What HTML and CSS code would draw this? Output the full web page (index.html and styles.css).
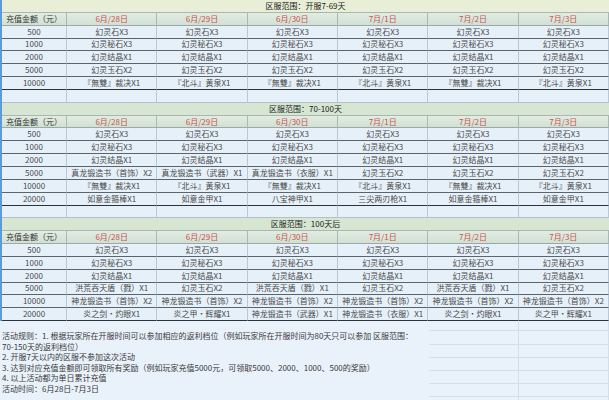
FILE: index.html
```html
<!DOCTYPE html>
<html lang="zh-CN">
<head>
<meta charset="utf-8">
<title>返利活动</title>
<link rel="stylesheet" href="styles.css">
</head>
<body>
<div class="sheet">
  <div class="grid">
    <div class="title t1">区服范围：开服7-69天</div>
    <div class="hd first">充值金额（元）</div><div class="hd">6月/28日</div><div class="hd">6月/29日</div><div class="hd">6月/30日</div><div class="hd">7月/1日</div><div class="hd">7月/2日</div><div class="hd">7月/3日</div>
    <div class="c">500</div><div class="c">幻灵石X3</div><div class="c">幻灵石X3</div><div class="c">幻灵石X3</div><div class="c">幻灵石X3</div><div class="c">幻灵石X3</div><div class="c">幻灵石X3</div>
    <div class="c">1000</div><div class="c">幻灵秘石X3</div><div class="c">幻灵秘石X3</div><div class="c">幻灵秘石X3</div><div class="c">幻灵秘石X3</div><div class="c">幻灵秘石X3</div><div class="c">幻灵秘石X3</div>
    <div class="c">2000</div><div class="c">幻灵结晶X1</div><div class="c">幻灵结晶X1</div><div class="c">幻灵结晶X1</div><div class="c">幻灵结晶X1</div><div class="c">幻灵结晶X1</div><div class="c">幻灵结晶X1</div>
    <div class="c">5000</div><div class="c">幻灵玉石X2</div><div class="c">幻灵玉石X2</div><div class="c">幻灵玉石X2</div><div class="c">幻灵玉石X2</div><div class="c">幻灵玉石X2</div><div class="c">幻灵玉石X2</div>
    <div class="c last">10000</div><div class="c last">『無雙』裁决X1</div><div class="c last">『北斗』黄泉X1</div><div class="c last">『無雙』裁决X1</div><div class="c last">『北斗』黄泉X1</div><div class="c last">『無雙』裁决X1</div><div class="c last">『北斗』黄泉X1</div>
    <div class="e"></div><div class="e"></div><div class="e"></div><div class="e"></div><div class="e"></div><div class="e"></div><div class="e"></div>

    <div class="title">区服范围：70-100天</div>
    <div class="hd first">充值金额（元）</div><div class="hd">6月/28日</div><div class="hd">6月/29日</div><div class="hd">6月/30日</div><div class="hd">7月/1日</div><div class="hd">7月/2日</div><div class="hd">7月/3日</div>
    <div class="c">500</div><div class="c">幻灵石X3</div><div class="c">幻灵石X3</div><div class="c">幻灵石X3</div><div class="c">幻灵石X3</div><div class="c">幻灵石X3</div><div class="c">幻灵石X3</div>
    <div class="c">1000</div><div class="c">幻灵秘石X3</div><div class="c">幻灵秘石X3</div><div class="c">幻灵秘石X3</div><div class="c">幻灵秘石X3</div><div class="c">幻灵秘石X3</div><div class="c">幻灵秘石X3</div>
    <div class="c">2000</div><div class="c">幻灵结晶X1</div><div class="c">幻灵结晶X1</div><div class="c">幻灵结晶X1</div><div class="c">幻灵结晶X1</div><div class="c">幻灵结晶X1</div><div class="c">幻灵结晶X1</div>
    <div class="c">5000</div><div class="c">真龙锻造书（首饰）X2</div><div class="c">真龙锻造书（武器）X1</div><div class="c">真龙锻造书（衣服）X1</div><div class="c">幻灵玉石X2</div><div class="c">幻灵玉石X2</div><div class="c">幻灵玉石X2</div>
    <div class="c">10000</div><div class="c">『無雙』裁决X1</div><div class="c">『北斗』黄泉X1</div><div class="c">『無雙』裁决X1</div><div class="c">『北斗』黄泉X1</div><div class="c">『無雙』裁决X1</div><div class="c">『北斗』黄泉X1</div>
    <div class="c last">20000</div><div class="c last">如意金箍棒X1</div><div class="c last">如意金甲X1</div><div class="c last">八宝神甲X1</div><div class="c last">三尖两刃枪X1</div><div class="c last">如意金箍棒X1</div><div class="c last">如意金甲X1</div>
    <div class="e"></div><div class="e"></div><div class="e"></div><div class="e"></div><div class="e"></div><div class="e"></div><div class="e"></div>

    <div class="title">区服范围：100天后</div>
    <div class="hd first">充值金额（元）</div><div class="hd">6月/28日</div><div class="hd">6月/29日</div><div class="hd">6月/30日</div><div class="hd">7月/1日</div><div class="hd">7月/2日</div><div class="hd">7月/3日</div>
    <div class="c">500</div><div class="c">幻灵石X3</div><div class="c">幻灵石X3</div><div class="c">幻灵石X3</div><div class="c">幻灵石X3</div><div class="c">幻灵石X3</div><div class="c">幻灵石X3</div>
    <div class="c">1000</div><div class="c">幻灵秘石X3</div><div class="c">幻灵秘石X3</div><div class="c">幻灵秘石X3</div><div class="c">幻灵秘石X3</div><div class="c">幻灵秘石X3</div><div class="c">幻灵秘石X3</div>
    <div class="c">2000</div><div class="c">幻灵结晶X1</div><div class="c">幻灵结晶X1</div><div class="c">幻灵结晶X1</div><div class="c">幻灵结晶X1</div><div class="c">幻灵结晶X1</div><div class="c">幻灵结晶X1</div>
    <div class="c">5000</div><div class="c">洪荒吞天盾（戮）X1</div><div class="c">幻灵玉石X2</div><div class="c">洪荒吞天盾（戮）X1</div><div class="c">幻灵玉石X2</div><div class="c">洪荒吞天盾（戮）X1</div><div class="c">幻灵玉石X2</div>
    <div class="c">10000</div><div class="c">神龙锻造书（首饰）X2</div><div class="c">神龙锻造书（首饰）X2</div><div class="c">神龙锻造书（首饰）X2</div><div class="c">神龙锻造书（首饰）X2</div><div class="c">神龙锻造书（首饰）X2</div><div class="c">神龙锻造书（首饰）X2</div>
    <div class="c last">20000</div><div class="c last">炎之剑·灼眼X1</div><div class="c last">炎之甲·辉耀X1</div><div class="c last">神龙锻造书（武器）X1</div><div class="c last">神龙锻造书（衣服）X1</div><div class="c last">炎之剑·灼眼X1</div><div class="c last">炎之甲·辉耀X1</div>
  </div>
  <div class="notes">
    <div class="text">
      <p>活动规则：1. 根据玩家所在开服时间可以参加相应的返利档位（例如玩家所在开服时间为80天只可以参加 区服范围：</p>
      <p>70-150天的返利档位）</p>
      <p>2. 开服7天以内的区服不参加这次活动</p>
      <p>3. 达到对应充值金额即可领取所有奖励（例如玩家充值5000元，可领取5000、2000、1000、500的奖励）</p>
      <p>4. 以上活动都为单日累计充值</p>
      <p>活动时间：6月28日-7月3日</p>
    </div>
    <div class="cells"><div class="col"></div><div class="col"></div></div>
  </div>
</div>
</body>
</html>
```

FILE: styles.css
```css
* { box-sizing: border-box; }
html, body {
  margin: 0;
  padding: 0;
  background: #e9f1fa;
}
body {
  width: 609px;
  height: 400px;
  overflow: hidden;
  font-family: "Noto Sans CJK SC", "Noto Sans", sans-serif;
  font-size: 8px;
  color: #4a4a4a;
}
.sheet {
  display: flex;
  flex-direction: column;
}
.grid {
  display: grid;
  grid-template-columns: 65px repeat(6, 1fr);
  grid-auto-rows: 12.85px;
  border-left: 2px solid #5b9bd8;
}
.grid > div {
  display: flex;
  align-items: center;
  justify-content: center;
  white-space: nowrap;
  line-height: 1;
  border-right: 1px solid #b9c8d6;
  border-bottom: 1px solid #5a646e;
  background: #e6f0f9;
}
.grid > .title {
  grid-column: 1 / -1;
  background: #d6e6d2;
  border-right: none;
  border-bottom: 1px solid #a8b8b0;
  color: #222;
}
.grid > .title.t1 {
  background: #e8efd6;
}
.grid > .hd {
  background: linear-gradient(#e2ece2, #d2e0d4);
  color: #c8524e;
  border-bottom: 1px solid #9aaaa8;
  border-right: 1px solid #a8b8b4;
}
.grid > .hd.first {
  color: #333;
  justify-content: flex-start;
  padding-left: 4px;
}
.grid > .c.last {
  border-bottom: 1px solid #2a323a;
}
.grid > .e {
  border-bottom: 1px solid #b0c0cc;
}
.notes {
  display: flex;
  height: 79px;
}
.text {
  width: 429px;
  padding-top: 10px;
  padding-left: 2px;
}
.text p {
  margin: 0;
  line-height: 10.6px;
  white-space: nowrap;
  color: #3a3a3a;
}
.cells {
  flex: 1;
  display: flex;
  background:
    repeating-linear-gradient(to bottom, transparent 0, transparent 12px, #d4dee8 12px, #d4dee8 13px);
  background-position: 0 11px;
}
.col {
  flex: 1;
  border-right: 1px solid #d4dee8;
}
```
